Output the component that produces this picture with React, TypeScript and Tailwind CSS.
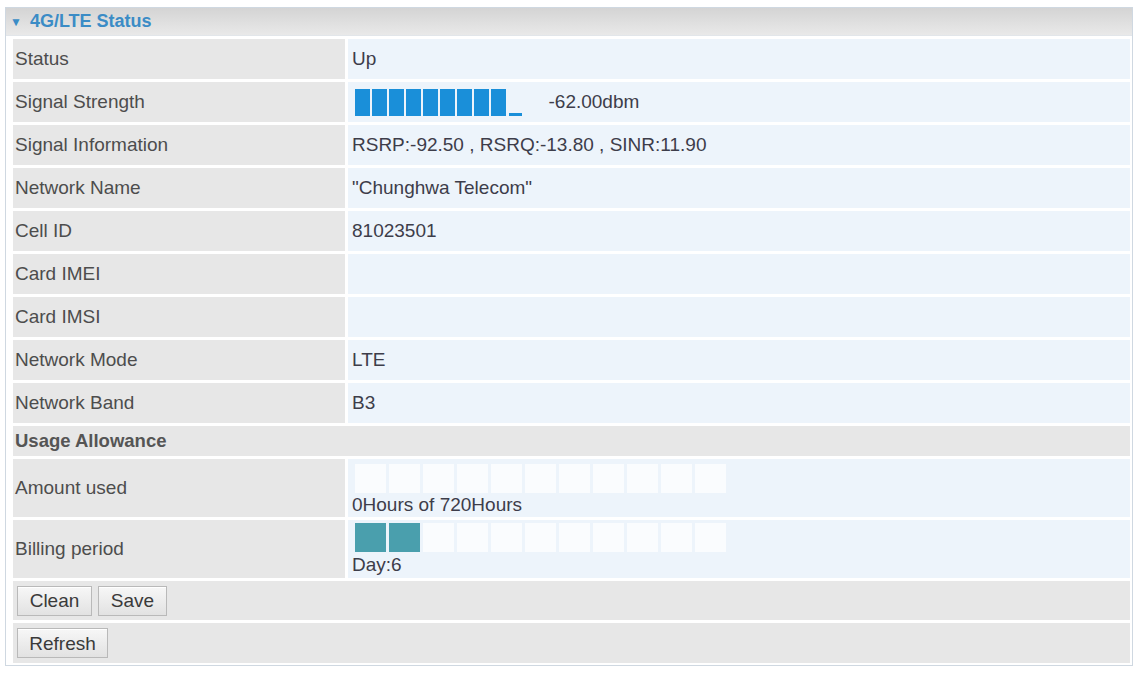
import React from "react";

const font = { fontFamily: "'Liberation Sans', Arial, Helvetica, sans-serif" };

function Label({ children }: { children?: React.ReactNode }) {
  return (
    <div className="flex items-center bg-[#e7e7e7] pl-[2px] text-[19px] text-[#4d4d4d]">
      {children}
    </div>
  );
}

function Value({ children }: { children?: React.ReactNode }) {
  return (
    <div className="flex items-center bg-[#edf4fb] pl-[4px] text-[19px] text-[#3d3d4a]">
      {children}
    </div>
  );
}

function Squares({ filled }: { filled: number }) {
  const items = Array.from({ length: 11 }, (_, i) => i < filled);
  return (
    <div className="flex gap-[3px]">
      {items.map((f, i) => (
        <div
          key={i}
          className={
            f
              ? "h-[29px] w-[31px] bg-[#4a9fad]"
              : "h-[29px] w-[31px] bg-[#fafcfe]"
          }
        />
      ))}
    </div>
  );
}

function Btn({ children, w }: { children: React.ReactNode; w: string }) {
  return (
    <button
      className={`${w} h-[30px] border border-[#b9b9b9] bg-gradient-to-b from-[#f7f7f7] to-[#e2e2e2] text-[19px] leading-none text-[#3a3a3a] shadow-[inset_0_1px_0_#ffffff]`}
    >
      {children}
    </button>
  );
}

export default function App() {
  return (
    <div className="h-[673px] w-[1137px] bg-white pt-[7px]" style={font}>
      <div className="ml-[5px] w-[1128px] border border-[#cfd8e1] bg-white">
        <div className="flex h-[28px] items-center border-b border-[#e2e6ea] bg-gradient-to-b from-[#d4d4d4] to-[#e9e9e9] pl-[4px]">
          <span className="mr-[8px] text-[12px] leading-none text-[#3b8cc6]">▼</span>
          <span className="text-[18px] font-bold text-[#3b8cc6]">4G/LTE Status</span>
        </div>
        <div className="grid grid-cols-[332px_782px] gap-[3px] pb-[2px] pl-[7px] pr-[2px] pt-[3px]">
          <div className="col-span-2 grid auto-rows-[40px] grid-cols-[332px_782px] gap-[3px]">
            <Label>Status</Label>
            <Value>Up</Value>
            <Label>Signal Strength</Label>
            <Value>
              <div className="ml-[3px] flex items-end">
                <div className="flex gap-[2.5px]">
                  {Array.from({ length: 9 }, (_, i) => (
                    <div key={i} className="h-[27px] w-[14.5px] bg-[#1a8fd9]" />
                  ))}
                </div>
                <div className="ml-[3px] h-[3px] w-[13px] bg-[#1a8fd9]" />
                <span className="ml-[27px] self-center">-62.00dbm</span>
              </div>
            </Value>
            <Label>Signal Information</Label>
            <Value>RSRP:-92.50 , RSRQ:-13.80 , SINR:11.90</Value>
            <Label>Network Name</Label>
            <Value>"Chunghwa Telecom"</Value>
            <Label>Cell ID</Label>
            <Value>81023501</Value>
            <Label>Card IMEI</Label>
            <Value />
            <Label>Card IMSI</Label>
            <Value />
            <Label>Network Mode</Label>
            <Value>LTE</Value>
            <Label>Network Band</Label>
            <Value>B3</Value>
          </div>
          <div className="col-span-2 flex h-[30px] items-center bg-[#e7e7e7] pl-[2px] text-[18.5px] font-bold text-[#555]">
            Usage Allowance
          </div>
          <Label>
            <div className="flex h-[58px] items-center">Amount used</div>
          </Label>
          <div className="flex h-[58px] flex-col bg-[#edf4fb] pl-[4px] pt-[5px] text-[19px] text-[#3d3d4a]">
            <div className="ml-[3px]">
              <Squares filled={0} />
            </div>
            <div className="mt-[2px] leading-[20px]">0Hours of 720Hours</div>
          </div>
          <Label>
            <div className="flex h-[58px] items-center">Billing period</div>
          </Label>
          <div className="flex h-[58px] flex-col bg-[#edf4fb] pl-[4px] pt-[3px] text-[19px] text-[#3d3d4a]">
            <div className="ml-[3px]">
              <Squares filled={2} />
            </div>
            <div className="mt-[3px] leading-[20px]">Day:6</div>
          </div>
          <div className="col-span-2 flex h-[39px] items-center gap-[6px] bg-[#e7e7e7] pl-[4px]">
            <Btn w="w-[75px]">Clean</Btn>
            <Btn w="w-[69px]">Save</Btn>
          </div>
          <div className="col-span-2 flex h-[40px] items-center bg-[#e7e7e7] pl-[4px]">
            <Btn w="w-[91px]">Refresh</Btn>
          </div>
        </div>
      </div>
    </div>
  );
}
